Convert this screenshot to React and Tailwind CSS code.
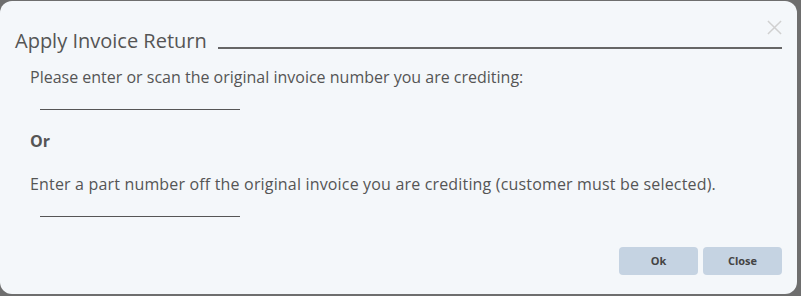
import React from "react";

const App = () => {
  return (
    <div className="w-[801px] h-[296px] bg-[#6e6e6e] pt-[1px] pr-[4px] pb-[2px] overflow-hidden">
      <div
        className="relative h-[293px] bg-[#f4f7fa] rounded-[12px] text-[#555] px-[15px] pt-[26px]"
        style={{ fontFamily: "'Open Sans', sans-serif" }}
      >
        <button className="absolute right-[15px] top-[19px] w-[15px] h-[15px] text-[#d0d0d0]">
          <svg viewBox="0 0 16 16" width="15" height="15" stroke="currentColor" strokeWidth="1.6" fill="none">
            <path d="M1 1 L15 15 M15 1 L1 15" />
          </svg>
        </button>
        <div className="flex items-end gap-[11px]">
          <h1 className="text-[20px] leading-[28px] whitespace-nowrap">Apply Invoice Return</h1>
          <div className="flex-1 h-[2px] bg-[#666] mb-[6px]" />
        </div>
        <div className="pl-[15px] text-[16px] leading-[22px]">
          <p className="mt-[11px]">Please enter or scan the original invoice number you are crediting:</p>
          <input className="block ml-[10px] mt-[1px] w-[200px] h-[21px] border-b border-[#555] bg-transparent outline-none" />
          <p className="mt-[20px] font-bold">Or</p>
          <p className="mt-[21px] tracking-[0.17px]">
            Enter a part number off the original invoice you are crediting (customer must be selected).
          </p>
          <input className="block ml-[10px] mt-[1px] w-[200px] h-[21px] border-b border-[#555] bg-transparent outline-none" />
        </div>
        <div className="flex justify-end gap-[5px] mt-[30px]">
          <button className="w-[79px] h-[28px] rounded-[4px] bg-[#c5d3e2] text-[11px] font-bold text-[#444]">Ok</button>
          <button className="w-[79px] h-[28px] rounded-[4px] bg-[#c5d3e2] text-[11px] font-bold text-[#444]">Close</button>
        </div>
      </div>
    </div>
  );
};

export default App;
